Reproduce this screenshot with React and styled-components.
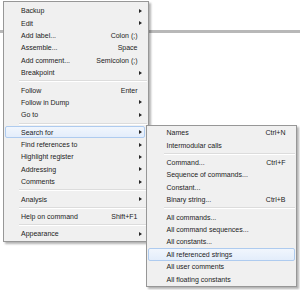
import React from "react";
import styled, { createGlobalStyle } from "styled-components";

const ROW = 12.4;

const mainMenu = [
  { label: "Backup", sub: true },
  { label: "Edit", sub: true },
  { label: "Add label...", key: "Colon (;)" },
  { label: "Assemble...", key: "Space" },
  { label: "Add comment...", key: "Semicolon (;)" },
  { label: "Breakpoint", sub: true },
  { sep: true },
  { label: "Follow", key: "Enter" },
  { label: "Follow in Dump", sub: true },
  { label: "Go to", sub: true },
  { sep: true },
  { label: "Search for", sub: true, active: true },
  { label: "Find references to", sub: true },
  { label: "Highlight register", sub: true },
  { label: "Addressing", sub: true },
  { label: "Comments", sub: true },
  { sep: true },
  { label: "Analysis", sub: true },
  { sep: true },
  { label: "Help on command", key: "Shift+F1" },
  { sep: true },
  { label: "Appearance", sub: true },
];

const searchMenu = [
  { label: "Names", key: "Ctrl+N" },
  { label: "Intermodular calls" },
  { sep: true },
  { label: "Command...", key: "Ctrl+F" },
  { label: "Sequence of commands..." },
  { label: "Constant..." },
  { label: "Binary string...", key: "Ctrl+B" },
  { sep: true },
  { label: "All commands..." },
  { label: "All command sequences..." },
  { label: "All constants..." },
  { label: "All referenced strings", active: true },
  { label: "All user comments" },
  { label: "All floating constants" },
];

const GlobalStyle = createGlobalStyle`
  html, body {
    margin: 0;
    padding: 0;
    background: #ffffff;
  }
  body {
    font-family: "Liberation Sans", Arial, sans-serif;
  }
`;

const Page = styled.div`
  position: relative;
  width: 300px;
  height: 290px;
  overflow: hidden;
  background: #ffffff;
`;

const Splitter = styled.div`
  margin-top: 30px;
  height: 3px;
  background: #b8b8b8;
`;

const Popup = styled.div`
  position: absolute;
  left: ${(p) => p.$left}px;
  top: ${(p) => p.$top}px;
  width: ${(p) => p.$width}px;
  box-sizing: border-box;
  display: flex;
  flex-direction: column;
  padding: ${(p) => p.$padTop}px 0 ${(p) => p.$padBottom}px;
  background: #f0f0f0;
  border: 1px solid #979797;
  box-shadow: 2px 2px 2px rgba(0, 0, 0, 0.3);
  font-size: 7px;
  color: #1c1c1c;
`;

const Item = styled.div`
  display: flex;
  align-items: center;
  height: ${ROW}px;
  box-sizing: border-box;
  margin: 0 ${(p) => p.$mr}px 0 1px;
  padding: 0 ${(p) => p.$pr}px 0 ${(p) => p.$pl}px;
  border: 1px solid ${(p) => (p.$active ? "#aecbef" : "transparent")};
  border-radius: 2px;
  background: ${(p) =>
    p.$active ? "linear-gradient(#f1f6fd, #e3edfb)" : "transparent"};
  white-space: nowrap;
`;

const Label = styled.span`
  flex: 1;
`;

const Shortcut = styled.span`
  margin-left: 8px;
`;

const ArrowSlot = styled.span`
  width: 6.5px;
  display: flex;
  justify-content: center;
`;

const Arrow = styled.span`
  width: 0;
  height: 0;
  border-left: 3px solid #262626;
  border-top: 2.5px solid transparent;
  border-bottom: 2.5px solid transparent;
`;

const Separator = styled.div`
  height: 5px;
  display: flex;
  flex-direction: column;
  justify-content: center;
  margin: 0 1px 0 ${(p) => p.$ml}px;

  &::before {
    content: "";
    height: 1px;
    background: #dcdcdc;
  }
  &::after {
    content: "";
    height: 1px;
    background: #ffffff;
  }
`;

const Menu = ({ items, left, top, width, padTop, padBottom, pl, pr, mr, sepLeft }) => (
  <Popup $left={left} $top={top} $width={width} $padTop={padTop} $padBottom={padBottom}>
    {items.map((it, i) =>
      it.sep ? (
        <Separator key={i} $ml={sepLeft} />
      ) : (
        <Item key={i} $active={it.active} $pl={pl} $pr={pr} $mr={mr}>
          <Label>{it.label}</Label>
          {it.key && <Shortcut>{it.key}</Shortcut>}
          <ArrowSlot>{it.sub && <Arrow />}</ArrowSlot>
        </Item>
      )
    )}
  </Popup>
);

export default function App() {
  return (
    <>
      <GlobalStyle />
      <Page>
        <Splitter />
        <Menu
          items={mainMenu}
          left={3}
          top={1}
          width={146}
          padTop={2.5}
          padBottom={0.5}
          pl={15}
          pr={0}
          mr={3}
          sepLeft={15}
        />
        <Menu
          items={searchMenu}
          left={146}
          top={125}
          width={151}
          padTop={0.6}
          padBottom={0.3}
          pl={17.5}
          pr={2}
          mr={1}
          sepLeft={17}
        />
      </Page>
    </>
  );
}
